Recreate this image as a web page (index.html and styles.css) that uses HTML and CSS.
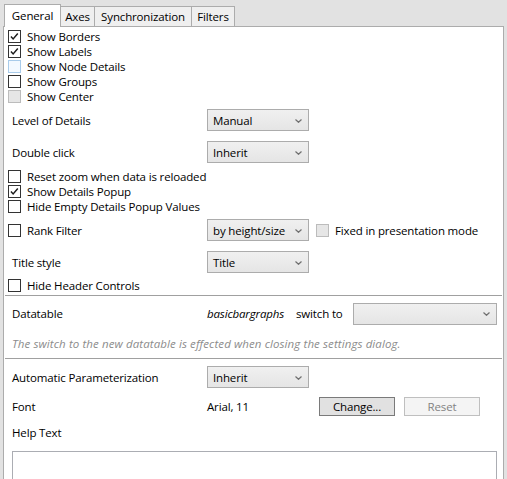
FILE: index.html
```html
<!DOCTYPE html>
<html>
<head>
<meta charset="utf-8">
<link rel="stylesheet" href="styles.css">
</head>
<body>
<div class="dialog">
  <div class="tabs">
    <div class="tab active w-general">General</div>
    <div class="tab w-axes">Axes</div>
    <div class="tab w-sync">Synchronization</div>
    <div class="tab w-filters">Filters</div>
  </div>
  <div class="panel">
    <div class="cb-group first">
      <div class="cb-row"><span class="cb"><svg viewBox="0 0 13 13"><path d="M2.3 6.4 L4.9 9.4 L10.4 2.9" /></svg></span>Show Borders</div>
      <div class="cb-row"><span class="cb"><svg viewBox="0 0 13 13"><path d="M2.3 6.4 L4.9 9.4 L10.4 2.9" /></svg></span>Show Labels</div>
      <div class="cb-row"><span class="cb hover"></span>Show Node Details</div>
      <div class="cb-row"><span class="cb"></span>Show Groups</div>
      <div class="cb-row"><span class="cb disabled"></span>Show Center</div>
    </div>

    <div class="field-row mt5">
      <span class="label">Level of Details</span>
      <div class="combo w-std"><span>Manual</span><svg class="chev" viewBox="0 0 7 4"><path d="M0.5 0.5 L3.5 3.3 L6.5 0.5"/></svg></div>
    </div>
    <div class="field-row mt10">
      <span class="label">Double click</span>
      <div class="combo w-std"><span>Inherit</span><svg class="chev" viewBox="0 0 7 4"><path d="M0.5 0.5 L3.5 3.3 L6.5 0.5"/></svg></div>
    </div>

    <div class="cb-group mt6">
      <div class="cb-row"><span class="cb"></span>Reset zoom when data is reloaded</div>
      <div class="cb-row"><span class="cb"><svg viewBox="0 0 13 13"><path d="M2.3 6.4 L4.9 9.4 L10.4 2.9" /></svg></span>Show Details Popup</div>
      <div class="cb-row"><span class="cb"></span>Hide Empty Details Popup Values</div>
    </div>

    <div class="field-row mt5">
      <span class="label cb-label"><span class="cb"></span>Rank Filter</span>
      <div class="combo w-std"><span>by height/size</span><svg class="chev" viewBox="0 0 7 4"><path d="M0.5 0.5 L3.5 3.3 L6.5 0.5"/></svg></div>
      <span class="cb disabled fixed-cb"></span><span>Fixed in presentation mode</span>
    </div>

    <div class="field-row mt10">
      <span class="label">Title style</span>
      <div class="combo w-std"><span>Title</span><svg class="chev" viewBox="0 0 7 4"><path d="M0.5 0.5 L3.5 3.3 L6.5 0.5"/></svg></div>
    </div>

    <div class="cb-group mt5">
      <div class="cb-row"><span class="cb"></span>Hide Header Controls</div>
    </div>

    <div class="sep sep1"></div>

    <div class="field-row dt-row">
      <span class="label">Datatable</span>
      <span class="dt-name">basicbargraphs</span>
      <span class="switch">switch to</span>
      <div class="combo w-dt"><span></span><svg class="chev" viewBox="0 0 7 4"><path d="M0.5 0.5 L3.5 3.3 L6.5 0.5"/></svg></div>
    </div>

    <div class="info">The switch to the new datatable is effected when closing the settings dialog.</div>

    <div class="sep sep2"></div>

    <div class="field-row ap-row">
      <span class="label">Automatic Parameterization</span>
      <div class="combo w-std"><span>Inherit</span><svg class="chev" viewBox="0 0 7 4"><path d="M0.5 0.5 L3.5 3.3 L6.5 0.5"/></svg></div>
    </div>

    <div class="field-row font-row">
      <span class="label">Font</span>
      <span class="font-val">Arial, 11</span>
      <div class="btn">Change...</div>
      <div class="btn disabled">Reset</div>
    </div>

    <div class="help-label">Help Text</div>
    <div class="textbox"></div>
  </div>
</div>
</body>
</html>
```

FILE: styles.css
```css
html, body {
  margin: 0;
  padding: 0;
}
body {
  background: #e2e2e2;
  font-family: "Open Sans", "Noto Sans", sans-serif;
  font-size: 11.5px;
  letter-spacing: -0.15px;
  color: #000;
  width: 507px;
  height: 479px;
  overflow: hidden;
}
.dialog {
  padding: 0 3px 0 3px;
}
.tabs {
  display: flex;
  align-items: flex-end;
  height: 26px;
  padding-left: 1px;
}
.tab {
  box-sizing: border-box;
  height: 20px;
  border: 1px solid #acacac;
  border-bottom: none;
  background: #efefef;
  margin-right: -1px;
  display: flex;
  align-items: center;
  justify-content: center;
  padding-bottom: 1px;
}
.tab.active {
  position: relative;
  z-index: 2;
  height: 23px;
  background: #fff;
  margin-bottom: -1px;
  padding-bottom: 2px;
}
.w-general { width: 57px; }
.w-axes { width: 35px; }
.w-sync { width: 98px; }
.w-filters { width: 44px; }

.panel {
  box-sizing: border-box;
  background: #fff;
  border: 1px solid #acacac;
  height: 470px;
  display: flex;
  flex-direction: column;
  position: relative;
}

.cb-group { display: flex; flex-direction: column; }
.cb-group.first { margin-top: 2px; }
.cb-row {
  height: 15px;
  display: flex;
  align-items: center;
  padding-left: 4px;
  line-height: 15px;
  white-space: nowrap;
}
.cb {
  box-sizing: border-box;
  width: 13px;
  height: 13px;
  border: 1px solid #333;
  background: #fff;
  margin-right: 6px;
  flex: none;
  display: inline-flex;
}
.cb svg {
  width: 11px;
  height: 11px;
}
.cb svg path {
  fill: none;
  stroke: #1c1c1c;
  stroke-width: 1.7;
}
.cb.hover {
  border-color: #a8cbea;
  background: #f3f9ff;
}
.cb.disabled {
  border-color: #bcbcbc;
  background: #e6e6e6;
}

.mt5 { margin-top: 5px; }
.mt6 { margin-top: 6px; }
.mt10 { margin-top: 10px; }

.field-row {
  display: flex;
  align-items: center;
  height: 22px;
  white-space: nowrap;
}
.label {
  width: 195px;
  padding-left: 8px;
  flex: none;
}
.cb-label {
  width: 199px;
  padding-left: 4px;
  display: flex;
  align-items: center;
}
.combo {
  box-sizing: border-box;
  height: 22px;
  border: 1px solid #acacac;
  background: linear-gradient(#f0f0f0, #e5e5e5);
  display: flex;
  align-items: center;
  justify-content: space-between;
  padding: 0 6px 0 5px;
  flex: none;
}
.w-std { width: 102px; }
.w-dt { width: 144px; }
.chev {
  width: 7px;
  height: 4px;
  margin-top: 1px;
}
.chev path {
  fill: none;
  stroke: #707070;
  stroke-width: 1.2;
}
.fixed-cb {
  margin-left: 7px;
}

.sep {
  height: 1px;
  background: #a0a0a0;
  margin-left: 1px;
  margin-right: 1px;
}
.sep1 { margin-top: 2px; }
.dt-row { margin-top: 7px; }
.dt-name {
  font-style: italic;
  width: 89px;
  flex: none;
}
.switch {
  width: 57px;
  flex: none;
}
.info {
  margin-top: 11px;
  height: 16px;
  line-height: 16px;
  padding-left: 8px;
  font-style: italic;
  letter-spacing: 0.1px;
  color: #8c8c8c;
  white-space: nowrap;
}
.sep2 { margin-top: 6px; }
.ap-row { margin-top: 8px; }
.font-row {
  margin-top: 9px;
  height: 19px;
}
.font-val {
  width: 112px;
  flex: none;
}
.btn {
  box-sizing: border-box;
  width: 76px;
  height: 19px;
  border: 1px solid #7a7a7a;
  background: #e1e1e1;
  display: flex;
  align-items: center;
  justify-content: center;
  margin-right: 9px;
  flex: none;
}
.btn.disabled {
  border-color: #bfbfbf;
  background: #f4f4f4;
  color: #838383;
}
.help-label {
  margin-top: 9px;
  height: 16px;
  line-height: 16px;
  padding-left: 8px;
}
.textbox {
  box-sizing: border-box;
  margin-top: 10px;
  margin-left: 8px;
  margin-right: 6px;
  height: 60px;
  border: 1px solid #abadb3;
  background: #fff;
}
```
